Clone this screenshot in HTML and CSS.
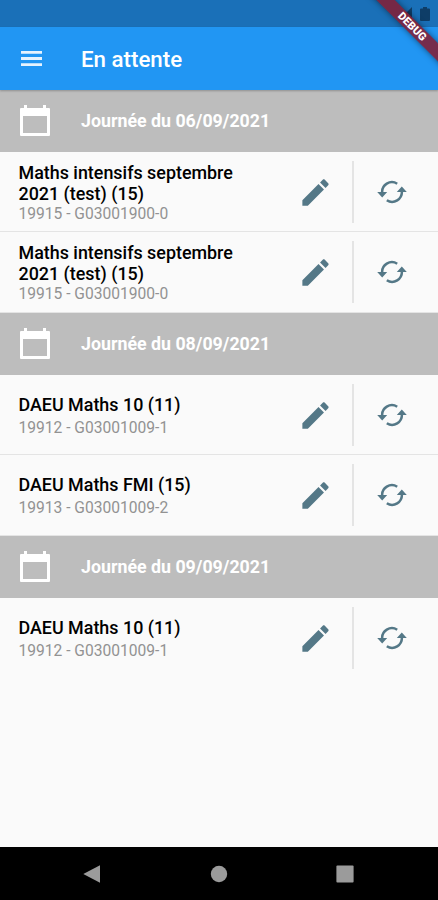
FILE: index.html
```
<!DOCTYPE html>
<html lang="fr">
<head>
  <meta charset="UTF-8">
  <meta name="viewport" content="width=device-width, initial-scale=1.0">
  <title>En attente</title>
  <link rel="stylesheet" href="styles.css">
</head>
<body>
  <!-- shared icons -->
  <svg class="sprite">
    <symbol id="calendar" viewBox="0 0 30 31">
      <path d="M4 0h3v3h16V0h3v3h3q1 0 1 1v26q0 1-1 1H1q-1 0-1-1V4q0-1 1-1h3zM3 11v17h24V11z" fill-rule="evenodd"/>
    </symbol>
    <symbol id="edit" viewBox="0 0 24 24">
      <path d="M3 17.25V21h3.75L17.81 9.94l-3.75-3.75L3 17.25zM20.71 7.04c.39-.39.39-1.02 0-1.41l-2.34-2.34c-.39-.39-1.02-.39-1.41 0l-1.83 1.83 3.75 3.75 1.83-1.83z"/>
    </symbol>
    <symbol id="sync" viewBox="0 0 30 24">
      <path d="M5.200 13A9.800 9.800 0 0 1 20.200 3.700M24.800 11A9.800 9.800 0 0 1 9.800 20.300" fill="none" stroke="#547887" stroke-width="2.500"/>
      <path d="M.2 12h10l-5 5.400zM19.800 12h10l-5-5.400z"/>
    </symbol>
  </svg>

  <div class="app">
    <div class="statusbar">
      <svg class="signal" viewBox="0 0 14 14"><path d="M0 14L14 0v14z"/></svg>
      <svg class="battery" viewBox="0 0 10 14"><path d="M3 0h4v1.500h2q1 0 1 1V13q0 1-1 1H1q-1 0-1-1V2.500q0-1 1-1h2z"/></svg>
    </div>

    <header class="appbar">
      <svg class="menu" viewBox="0 0 21 15"><path d="M0 0h21v2.800H0zM0 6.100h21v2.800H0zM0 12.200h21v2.800H0z"/></svg>
      <h1>En attente</h1>
    </header>

    <main>
      <div class="day">
        <svg class="calendar"><use href="#calendar"/></svg>
        <h2>Journée du 06/09/2021</h2>
      </div>
      <div class="item">
        <div class="text">
          <div class="name">Maths intensifs septembre<br>2021 (test) (15)</div>
          <div class="code">19915 - G03001900-0</div>
        </div>
        <button class="edit"><svg class="icon"><use href="#edit"/></svg></button>
        <button class="sync"><svg class="icon"><use href="#sync"/></svg></button>
      </div>
      <div class="item">
        <div class="text">
          <div class="name">Maths intensifs septembre<br>2021 (test) (15)</div>
          <div class="code">19915 - G03001900-0</div>
        </div>
        <button class="edit"><svg class="icon"><use href="#edit"/></svg></button>
        <button class="sync"><svg class="icon"><use href="#sync"/></svg></button>
      </div>

      <div class="day">
        <svg class="calendar"><use href="#calendar"/></svg>
        <h2>Journée du 08/09/2021</h2>
      </div>
      <div class="item single">
        <div class="text">
          <div class="name">DAEU Maths 10 (11)</div>
          <div class="code">19912 - G03001009-1</div>
        </div>
        <button class="edit"><svg class="icon"><use href="#edit"/></svg></button>
        <button class="sync"><svg class="icon"><use href="#sync"/></svg></button>
      </div>
      <div class="item single">
        <div class="text">
          <div class="name">DAEU Maths FMI (15)</div>
          <div class="code">19913 - G03001009-2</div>
        </div>
        <button class="edit"><svg class="icon"><use href="#edit"/></svg></button>
        <button class="sync"><svg class="icon"><use href="#sync"/></svg></button>
      </div>

      <div class="day">
        <svg class="calendar"><use href="#calendar"/></svg>
        <h2>Journée du 09/09/2021</h2>
      </div>
      <div class="item single">
        <div class="text">
          <div class="name">DAEU Maths 10 (11)</div>
          <div class="code">19912 - G03001009-1</div>
        </div>
        <button class="edit"><svg class="icon"><use href="#edit"/></svg></button>
        <button class="sync"><svg class="icon"><use href="#sync"/></svg></button>
      </div>
    </main>

    <nav class="navbar">
      <svg viewBox="0 0 18 18"><path d="M16 .3v17.400L-.7 9z"/></svg>
      <svg viewBox="0 0 18 18"><circle cx="9" cy="9" r="8.200"/></svg>
      <svg viewBox="0 0 18 18"><rect x=".4" y=".4" width="17.200" height="17.200" rx="1"/></svg>
    </nav>

    <div class="debug">DEBUG</div>
  </div>
</body>
</html>
```
FILE: styles.css
```
* {
  box-sizing: border-box;
}

body {
  margin: 0;
  font-family: Roboto, Arial, sans-serif;
  background: #fafafa;
}

.sprite {
  display: none;
}

.app {
  position: relative;
  display: flex;
  flex-direction: column;
  width: 438px;
  height: 900px;
  overflow: hidden;
}

.statusbar {
  display: flex;
  justify-content: flex-end;
  gap: 8px;
  height: 27px;
  padding: 7px 8px 0 0;
  background: #1a70b8;
  fill: #0e3d67;
}

.signal {
  width: 14px;
  height: 14px;
}

.battery {
  width: 10px;
  height: 14px;
}

.appbar {
  position: relative;
  display: flex;
  align-items: center;
  gap: 39px;
  height: 62.6px;
  padding: 1px 21px 0;
  background: #2196f3;
  box-shadow: 0 1px 2px rgba(0, 0, 0, 0.25);
  color: #fff;
}

.menu {
  width: 21px;
  height: 15px;
  fill: #e6f3fe;
}

h1 {
  margin: 0;
  font-size: 22.3px;
  font-weight: 500;
}

main {
  flex: 1;
}

.icon {
  display: block;
  width: 35px;
  height: 35px;
}

.day {
  display: flex;
  align-items: center;
  gap: 31px;
  height: 62.4px;
  padding: 0 0 1px 20px;
  background: #bdbdbd;
  color: #fff;
  fill: #fff;
}

.calendar {
  width: 30px;
  height: 31px;
}

h2 {
  margin: 0;
  font-size: 17.8px;
  font-weight: 700;
}

.item {
  display: flex;
  align-items: center;
  height: 80.3px;
  padding-left: 18.5px;
  border-bottom: 1.5px solid #e4e4e4;
}

.item:last-child {
  border-bottom-color: transparent;
}

.text {
  flex: 1;
  padding-top: 3px;
}

.name {
  font-size: 17.9px;
  font-weight: 500;
  line-height: 21px;
  color: #000;
}

.code {
  font-size: 15.6px;
  line-height: 20px;
  color: #929292;
}

.single .code {
  margin-top: 3px;
}

button {
  display: flex;
  align-items: center;
  justify-content: center;
  height: 62px;
  padding: 0;
  border: none;
  background: none;
  fill: #547887;
}

.edit {
  width: 75px;
  padding: 1px 0 0 1px;
}

.sync {
  width: 86px;
  padding-right: 9px;
  border-left: 2px solid #e4e4e4;
}

.sync .icon {
  width: 30px;
  height: 24px;
}

.navbar {
  display: flex;
  align-items: center;
  justify-content: center;
  gap: 108px;
  height: 53px;
  background: #000;
  fill: #9b9b9b;
}

.navbar svg {
  width: 18px;
  height: 18px;
  overflow: visible;
}

/* corner ribbon */
.debug {
  position: absolute;
  top: 20px;
  left: 352px;
  width: 120px;
  height: 13.4px;
  background: rgba(128, 32, 58, 0.9);
  box-shadow: 0 0 6px rgba(0, 0, 0, 0.5);
  color: #fff;
  font-size: 11px;
  font-weight: 900;
  line-height: 13.4px;
  text-align: center;
  transform: rotate(45deg);
}
```
